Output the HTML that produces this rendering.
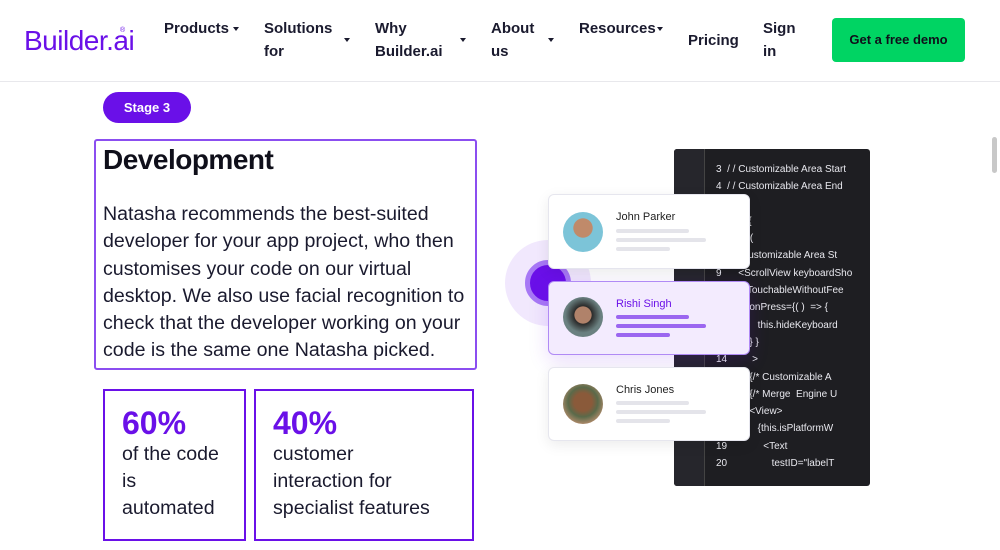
<!DOCTYPE html>
<html><head><style>
*{margin:0;padding:0;box-sizing:border-box}
body{width:1000px;height:550px;overflow:hidden;background:#fff;font-family:"Liberation Sans",sans-serif;position:relative;color:#0f0f1a}
.a{position:absolute}
.nav{font-weight:bold;font-size:15px;line-height:23px;color:#1a1a2e}
.car{width:0;height:0;border-left:3px solid transparent;border-right:3px solid transparent;border-top:4px solid #1a1a2e}
.card{background:#fff;border:1px solid #e6e6ee;border-radius:6px;box-shadow:0 4px 14px rgba(0,0,0,.08)}
.bar{height:4px;border-radius:2px;background:#e4e4ea}
.av{width:40px;height:40px;border-radius:50%}
.code{font-size:10px;color:#e8e8ee;line-height:17.3px;white-space:pre}
</style></head><body>
<div class="a" style="left:24px;top:25px;font-size:28px;color:#6a10e8;letter-spacing:-0.5px">Builder.ai</div>
<div class="a" style="left:120px;top:27px;font-size:7px;color:#6a10e8">®</div>
<div class="a nav" style="left:164px;top:17px">Products</div><div class="a car" style="left:233px;top:27px"></div>
<div class="a nav" style="left:264px;top:17px">Solutions<br>for</div><div class="a car" style="left:344px;top:38px"></div>
<div class="a nav" style="left:375px;top:17px">Why<br>Builder.ai</div><div class="a car" style="left:460px;top:38px"></div>
<div class="a nav" style="left:491px;top:17px">About<br>us</div><div class="a car" style="left:548px;top:38px"></div>
<div class="a nav" style="left:579px;top:17px">Resources</div><div class="a car" style="left:657px;top:27px"></div>
<div class="a nav" style="left:688px;top:29px">Pricing</div>
<div class="a nav" style="left:763px;top:17px">Sign<br>in</div>
<div class="a" style="left:832px;top:18px;width:133px;height:44px;background:#00d463;border-radius:4px;font-weight:bold;font-size:13px;color:#0f0f1a;text-align:center;line-height:44px">Get a free demo</div>
<div class="a" style="left:0;top:81px;width:1000px;height:1px;background:#e8e8ec"></div>
<div class="a" style="left:992px;top:137px;width:5px;height:36px;background:#c8c8c8;border-radius:3px"></div>

<div class="a" style="left:103px;top:92px;width:88px;height:31px;background:#6a10e8;border-radius:16px;color:#fff;font-weight:bold;font-size:13px;text-align:center;line-height:31px">Stage 3</div>
<div class="a" style="left:94px;top:139px;width:383px;height:231px;border:2px solid #8b4ef0;border-radius:3px"></div>
<div class="a" style="left:103px;top:144px;font-size:28px;font-weight:bold;letter-spacing:-0.5px">Development</div>
<div class="a" style="left:103px;top:201px;width:370px;font-size:19.6px;line-height:27.3px;color:#1a1a2e">Natasha recommends the best-suited developer for your app project, who then customises your code on our virtual desktop. We also use facial recognition to check that the developer working on your code is the same one Natasha picked.</div>
<div class="a" style="left:103px;top:389px;width:143px;height:152px;border:2px solid #6a10e8"></div>
<div class="a" style="left:254px;top:389px;width:220px;height:152px;border:2px solid #6a10e8"></div>
<div class="a" style="left:122px;top:405px;font-size:32px;font-weight:bold;color:#6a10e8">60%</div>
<div class="a" style="left:122px;top:441px;font-size:19.6px;line-height:27px;color:#1a1a2e">of the code<br>is<br>automated</div>
<div class="a" style="left:273px;top:405px;font-size:32px;font-weight:bold;color:#6a10e8">40%</div>
<div class="a" style="left:273px;top:441px;font-size:19.6px;line-height:27px;color:#1a1a2e">customer<br>interaction for<br>specialist features</div>

<div class="a" style="left:674px;top:149px;width:196px;height:337px;background:#1e1e22;border-radius:3px;overflow:hidden">
<div class="a" style="left:0;top:0;width:31px;height:337px;background:#26262c;border-right:1px solid #444"></div>
<div class="a code" style="left:42px;top:12px">3  / / Customizable Area Start
4  / / Customizable Area End

     er() {
     turn (
    / /  Customizable Area St
9      &lt;ScrollView keyboardSho
         &lt;TouchableWithoutFee
            onPress={( )  =&gt; {
               this.hideKeyboard
            } }
14         &gt;
            {/* Customizable A
            {/* Merge  Engine U
            &lt;View&gt;
               {this.isPlatformW
19             &lt;Text
20                testID="labelT</div>
</div>
<div class="a" style="left:505px;top:240px;width:86px;height:86px;border-radius:50%;background:#f1e8fd"></div>
<div class="a" style="left:525px;top:260px;width:46px;height:46px;border-radius:50%;background:#6a10e8;border:5px solid #a778f5"></div>

<div class="a card" style="left:548px;top:194px;width:202px;height:75px"></div>
<div class="a av" style="left:563px;top:212px;background:radial-gradient(circle at 50% 40%,#c08a6a 30%,#7cc4d8 32%)"></div>
<div class="a" style="left:616px;top:211px;font-size:11px;color:#222">John Parker</div>
<div class="a bar" style="left:616px;top:229px;width:73px"></div><div class="a bar" style="left:616px;top:238px;width:90px"></div><div class="a bar" style="left:616px;top:247px;width:54px"></div>

<div class="a card" style="left:548px;top:281px;width:202px;height:74px;background:#f3ebfe;border:1px solid #b08af5;box-shadow:0 6px 20px rgba(106,16,232,.15)"></div>
<div class="a av" style="left:563px;top:297px;background:radial-gradient(circle at 50% 45%,#b0826a 28%,#2a2a2a 30%,#6a8080 60%)"></div>
<div class="a" style="left:616px;top:298px;font-size:11px;color:#6a10e8">Rishi Singh</div>
<div class="a bar" style="left:616px;top:315px;width:73px;background:#9b66f0"></div><div class="a bar" style="left:616px;top:324px;width:90px;background:#9b66f0"></div><div class="a bar" style="left:616px;top:333px;width:54px;background:#9b66f0"></div>

<div class="a card" style="left:548px;top:367px;width:202px;height:74px"></div>
<div class="a av" style="left:563px;top:384px;background:radial-gradient(circle at 50% 45%,#8a5a3a 30%,#5a6a4a 50%,#c09070 80%)"></div>
<div class="a" style="left:616px;top:384px;font-size:11px;color:#222">Chris Jones</div>
<div class="a bar" style="left:616px;top:401px;width:73px"></div><div class="a bar" style="left:616px;top:410px;width:90px"></div><div class="a bar" style="left:616px;top:419px;width:54px"></div>
</body></html>
